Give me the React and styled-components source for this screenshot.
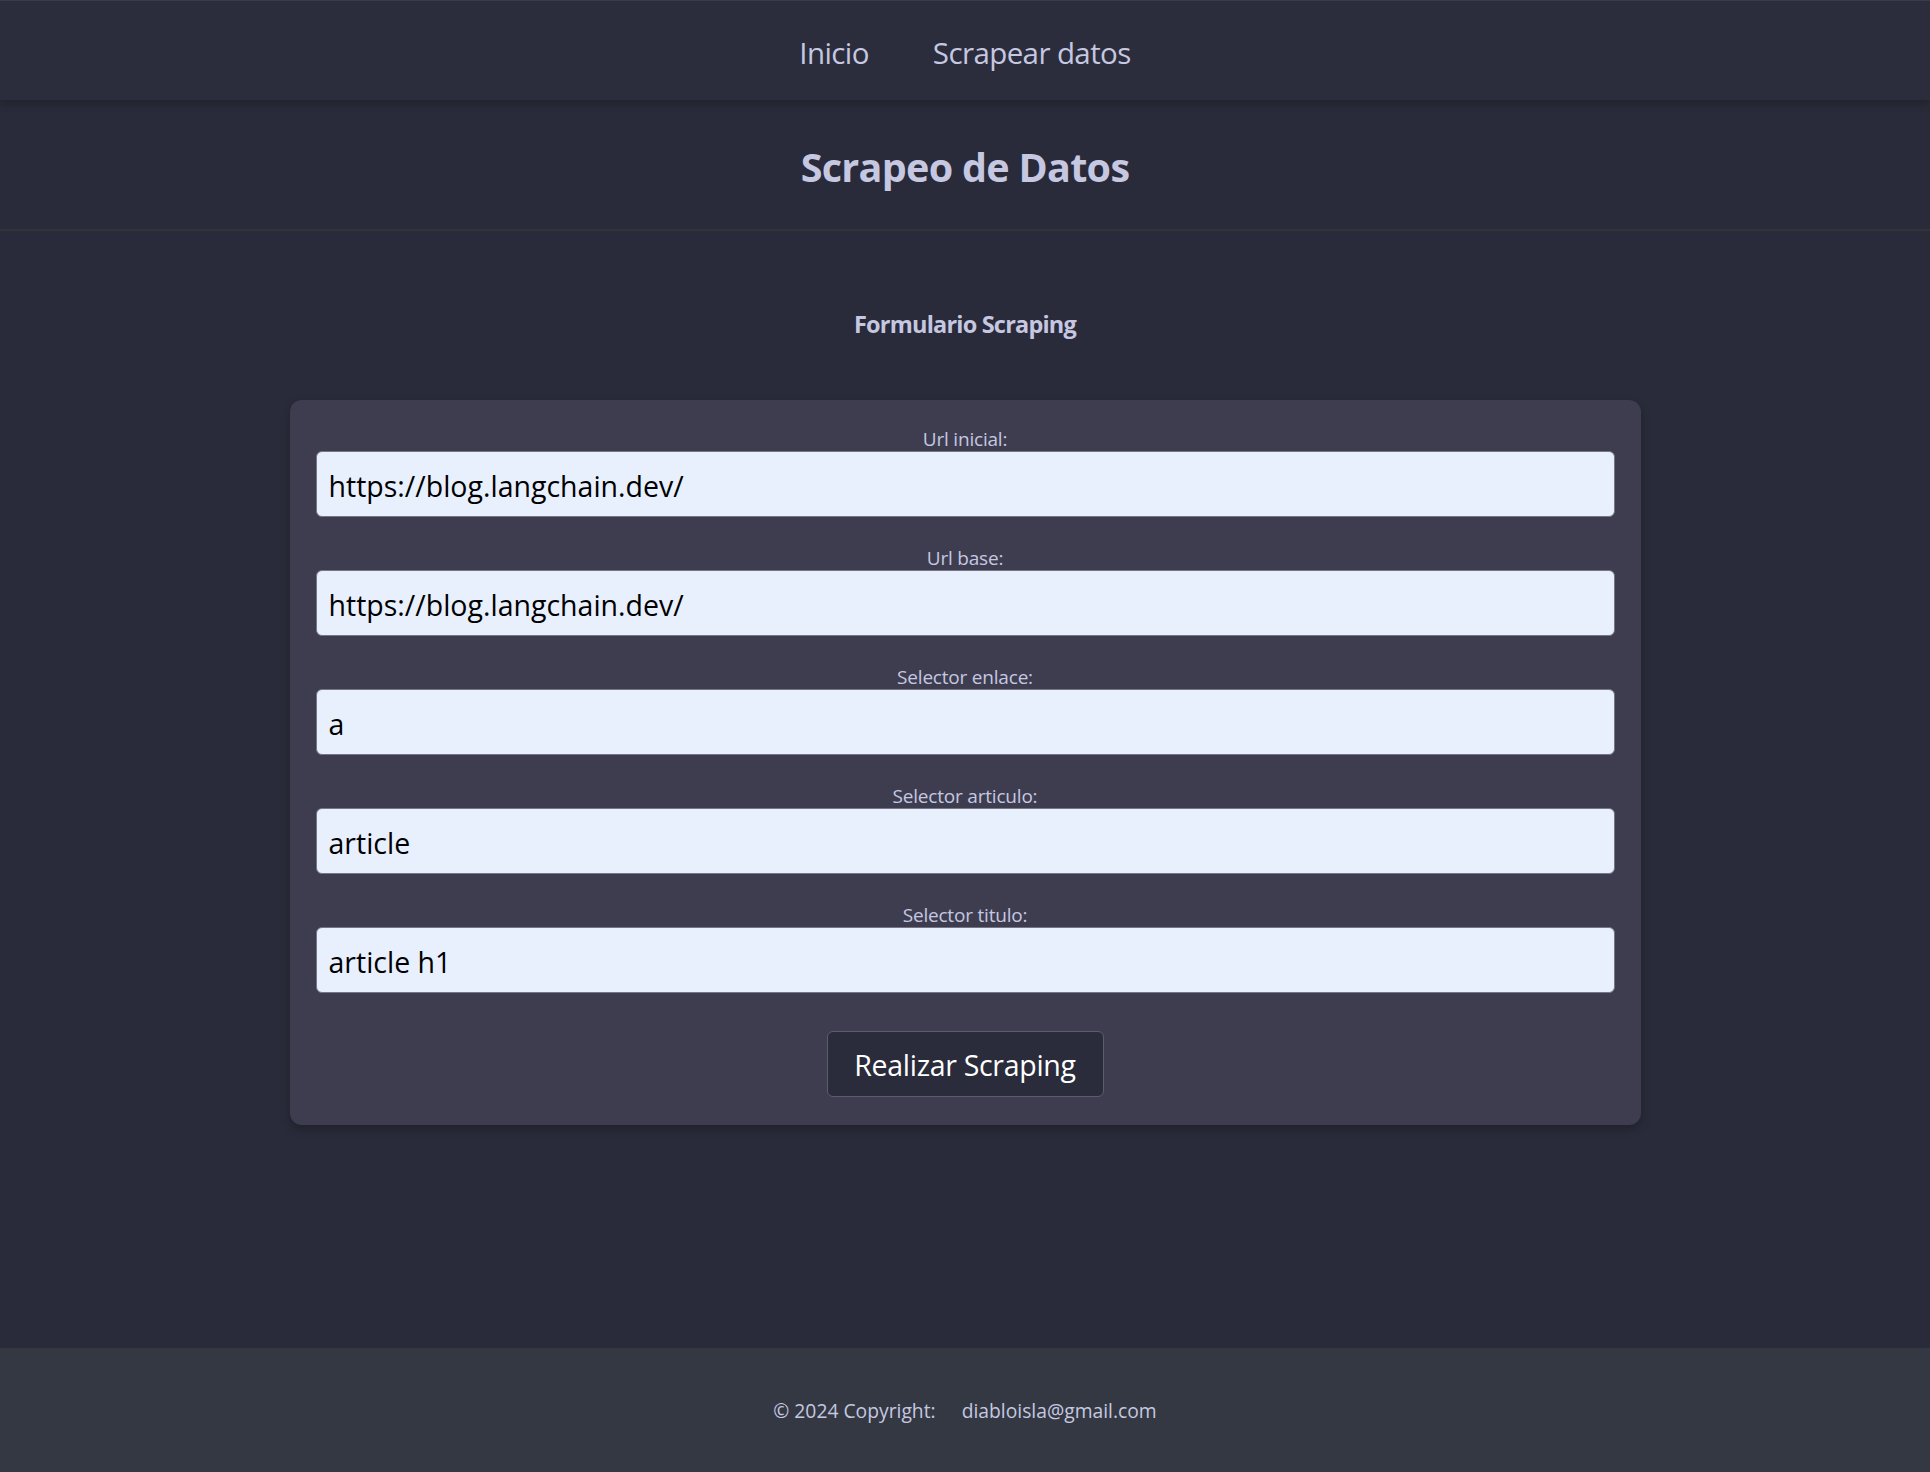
import styled, { createGlobalStyle } from "styled-components";

const GlobalStyle = createGlobalStyle`
  html, body {
    margin: 0;
    padding: 0;
    background: #2a2b3a;
  }
  body {
    font-family: "Segoe UI", "Open Sans", "Noto Sans", sans-serif;
    color: #c5c8e0;
  }
  * {
    box-sizing: border-box;
  }
`;

const fields = [
  { id: "url_inicial", label: "Url inicial:", value: "https://blog.langchain.dev/" },
  { id: "url_base", label: "Url base:", value: "https://blog.langchain.dev/" },
  { id: "selector_enlace", label: "Selector enlace:", value: "a" },
  { id: "selector_articulo", label: "Selector articulo:", value: "article" },
  { id: "selector_titulo", label: "Selector titulo:", value: "article h1" },
];

function App() {
  return (
    <>
      <GlobalStyle />
      <Page>
        <Navbar>
          <NavLink href="#">Inicio</NavLink>
          <NavLink href="#">Scrapear datos</NavLink>
        </Navbar>

        <Header>
          <h1>Scrapeo de Datos</h1>
        </Header>

        <Main>
          <FormTitle>Formulario Scraping</FormTitle>
          <Card onSubmit={(e) => e.preventDefault()}>
            {fields.map((field) => (
              <Field key={field.id}>
                <label htmlFor={field.id}>{field.label}</label>
                <Input id={field.id} defaultValue={field.value} />
              </Field>
            ))}
            <SubmitButton type="submit">Realizar Scraping</SubmitButton>
          </Card>
        </Main>

        <Footer>
          <span>© 2024 Copyright:</span>
          <span>diabloisla@gmail.com</span>
        </Footer>
      </Page>
    </>
  );
}

const Page = styled.div`
  min-height: 100vh;
  display: flex;
  flex-direction: column;
`;

const Navbar = styled.nav`
  height: 100px;
  display: flex;
  justify-content: center;
  align-items: center;
  gap: 64px;
  padding-top: 3px;
  background: #2b2d3c;
  border-top: 1px solid #3a3d48;
  box-shadow: 0 4px 8px rgba(0, 0, 0, 0.22);
  position: relative;
  z-index: 1;
`;

const NavLink = styled.a`
  font-size: 29.5px;
  letter-spacing: -0.6px;
  color: #c5c8e0;
  text-decoration: none;
`;

const Header = styled.header`
  height: 131px;
  display: flex;
  justify-content: center;
  align-items: center;
  padding-top: 5px;
  border-bottom: 2px solid #33333a;

  h1 {
    margin: 0;
    font-size: 39.5px;
    letter-spacing: -0.7px;
    font-weight: 700;
    color: #c5c8e0;
  }
`;

const Main = styled.main`
  flex: 1;
  display: flex;
  flex-direction: column;
  align-items: center;
  padding-top: 78px;
`;

const FormTitle = styled.h5`
  margin: 0 0 61px;
  font-size: 23.5px;
  letter-spacing: -0.8px;
  line-height: 30px;
  font-weight: 700;
  color: #c5c8e0;
`;

const Card = styled.form`
  width: 1351px;
  padding: 27px 26px 28px;
  display: flex;
  flex-direction: column;
  align-items: center;
  gap: 29px;
  background: #3e3d50;
  border-radius: 12px;
  box-shadow: 0 4px 10px rgba(0, 0, 0, 0.25);
`;

const Field = styled.div`
  width: 100%;
  display: flex;
  flex-direction: column;
  align-items: center;

  label {
    font-size: 19px;
    letter-spacing: -0.2px;
    line-height: 24px;
    color: #c5c8e0;
  }
`;

const Input = styled.input`
  width: 100%;
  height: 66px;
  padding: 3px 12px 0;
  font-family: inherit;
  font-size: 28.5px;
  color: #000;
  background: #e8f0fe;
  border: 1px solid #767686;
  border-radius: 6px;
  outline: none;
`;

const SubmitButton = styled.button`
  margin-top: 9px;
  width: 277px;
  height: 66px;
  padding-top: 3px;
  font-family: inherit;
  font-size: 28.5px;
  letter-spacing: -0.3px;
  color: #ffffff;
  background: #2a2b3b;
  border: 1px solid #5c5c6c;
  border-radius: 6px;
  cursor: pointer;
`;

const Footer = styled.footer`
  margin-top: 180px;
  height: 124px;
  display: flex;
  justify-content: center;
  align-items: center;
  gap: 26px;
  font-size: 19.3px;
  color: #c5c8e0;
  background: #343843;
`;

export default App;
